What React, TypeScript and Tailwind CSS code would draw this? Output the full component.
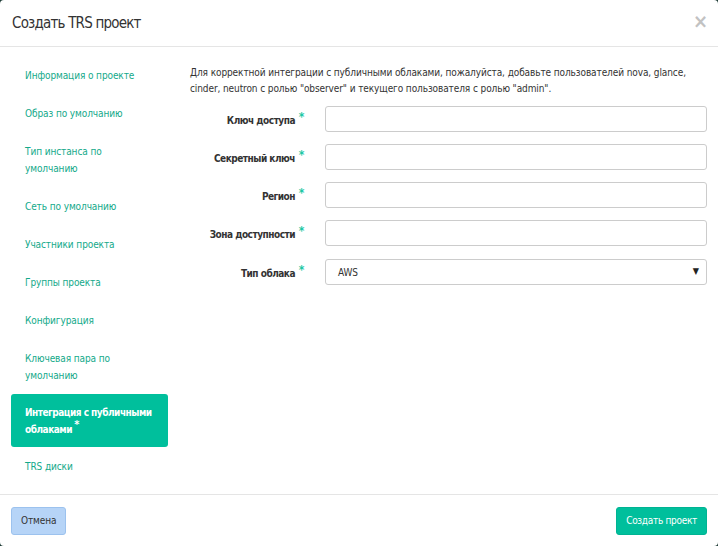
import React from 'react';

const font = { fontFamily: '"DejaVu Sans Condensed", "DejaVu Sans", sans-serif' };

const steps = [
  'Информация о проекте',
  'Образ по умолчанию',
  'Тип инстанса по умолчанию',
  'Сеть по умолчанию',
  'Участники проекта',
  'Группы проекта',
  'Конфигурация',
  'Ключевая пара по умолчанию',
  'Интеграция с публичными облаками',
  'TRS диски',
];

const fields = ['Ключ доступа', 'Секретный ключ', 'Регион', 'Зона доступности'];

function Star() {
  return <span className="absolute -right-[9px] -top-[4px] text-[12px] font-bold leading-none text-[#1fc7a4]">*</span>;
}

function Label({ text }: { text: string }) {
  return (
    <div className="w-[135px] text-right pr-[30px] shrink-0">
      <span className="relative text-[10px] font-bold tracking-[-0.5px] text-[#333]">
        {text}
        <Star />
      </span>
    </div>
  );
}

export default function App() {
  return (
    <div className="w-[718px] h-[546px] bg-[#1d3b35]" style={font}>
      <div className="w-full h-full bg-white rounded-[4px] flex flex-col">
        {/* header */}
        <div className="h-[47px] border-b border-[#e5e5e5] flex items-center justify-between pl-3 pr-[10px]">
          <h3 className="text-[15px] text-[#333] tracking-[-0.8px]">Создать TRS проект</h3>
          <span className="text-[20px] font-bold text-[#c2c2c2] leading-none -mt-[4px]">×</span>
        </div>

        {/* body */}
        <div className="flex-1 flex">
          <ul className="w-[179px] pl-[11px] pr-[11px] pt-[9px] flex flex-col">
            {steps.map((s, i) => {
              const active = i === 8;
              return (
                <li
                  key={s}
                  className={
                    active
                      ? 'bg-[#00bf9c] rounded-[3px] px-[14px] py-[9.5px] text-white font-bold text-[10px] tracking-[-0.5px] leading-[17px]'
                      : 'px-[14px] py-[10.5px] text-[#13a98a] text-[10px] tracking-[-0.1px] leading-[17px]'
                  }
                >
                  {active ? (
                    <>
                      Интеграция с публичными{' '}
                      <span className="relative">
                        облаками
                        <span className="absolute -right-[7px] -top-[5px] text-[11px] leading-none">*</span>
                      </span>
                    </>
                  ) : (
                    s
                  )}
                </li>
              );
            })}
          </ul>

          <div className="flex-1 pl-[11px] pr-[11px] pt-[18px]">
            <p className="text-[10px] tracking-[-0.1px] leading-[16px] text-[#333] mb-[9px]">
              Для корректной интеграции с публичными облаками, пожалуйста, добавьте пользователей nova, glance, cinder, neutron с ролью "observer" и текущего пользователя с ролью "admin".
            </p>
            <div className="flex flex-col gap-[12px]">
              {fields.map((f) => (
                <div key={f} className="flex items-center">
                  <Label text={f} />
                  <div className="flex-1 h-[26px] border border-[#cccccc] rounded-[3px] bg-white" />
                </div>
              ))}
              <div className="flex items-center mt-[1px]">
                <Label text="Тип облака" />
                <div className="flex-1 h-[26px] border border-[#cccccc] rounded-[3px] bg-white flex items-center justify-between pl-[12px] pr-[7px]">
                  <span className="text-[10px] tracking-[-0.1px] text-[#333]">AWS</span>
                  <span className="text-[9px] text-[#222]">▼</span>
                </div>
              </div>
            </div>
          </div>
        </div>

        {/* footer */}
        <div className="h-[52px] border-t border-[#e5e5e5] flex items-center justify-between px-[11px]">
          <button className="h-[28px] px-[9px] rounded-[3px] bg-[#b6d4f7] border border-[#9cc2ee] text-[10px] tracking-[-0.1px] text-[#333]">
            Отмена
          </button>
          <button className="h-[28px] px-[9px] rounded-[3px] bg-[#00bf9c] border border-[#00b393] text-[10px] tracking-[-0.3px] text-white">
            Создать проект
          </button>
        </div>
      </div>
    </div>
  );
}
